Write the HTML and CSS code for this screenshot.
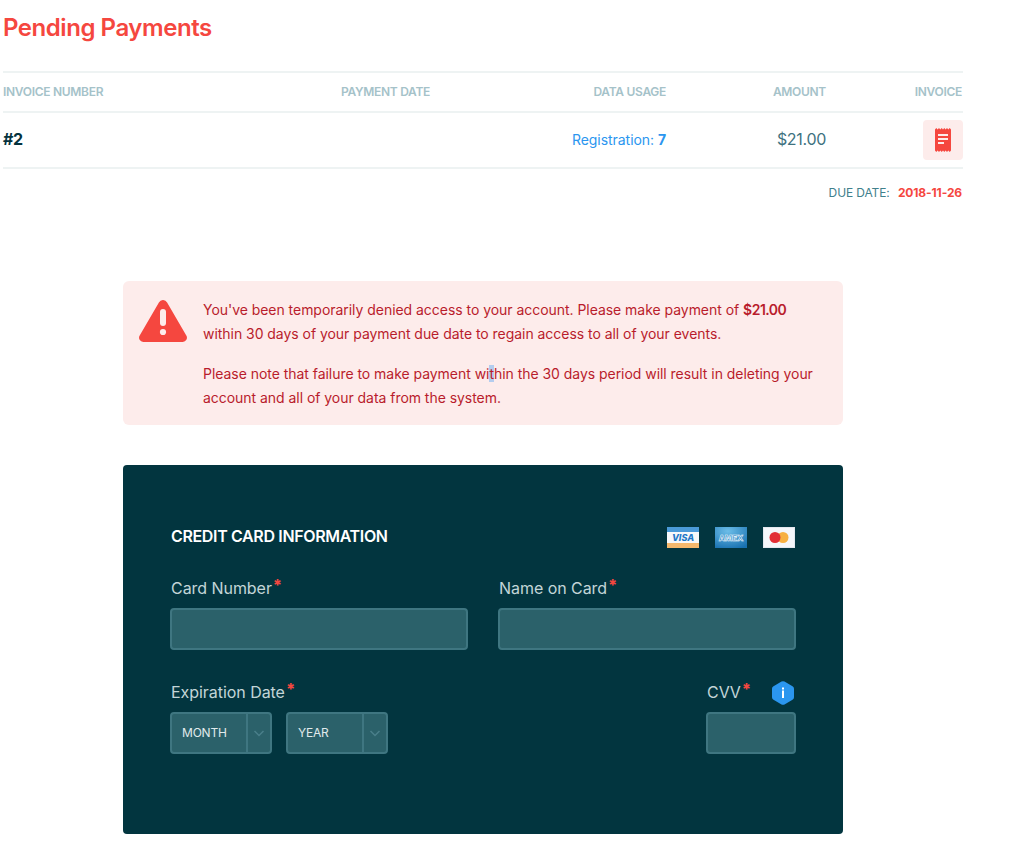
FILE: index.html
```html
<!DOCTYPE html>
<html lang="en">
<head>
<meta charset="utf-8">
<title>Pending Payments</title>
<link rel="stylesheet" href="styles.css">
</head>
<body>
<main class="page">
  <section class="pending">
    <h1 class="title">Pending Payments</h1>
    <div class="table">
      <div class="row head">
        <div>INVOICE NUMBER</div>
        <div>PAYMENT DATE</div>
        <div class="right">DATA USAGE</div>
        <div class="right">AMOUNT</div>
        <div class="right inset">INVOICE</div>
      </div>
      <div class="row body-row">
        <div class="num">#2</div>
        <div></div>
        <div class="right usage">Registration: <b>7</b></div>
        <div class="right amount">$21.00</div>
        <div class="right">
          <a class="receipt" aria-label="Invoice">
            <svg width="16" height="24" viewBox="0 0 16 24"><path fill="#f5473f" d="M0 1.5 1.3 0l1.3 1.5L4 0l1.3 1.5L6.7 0 8 1.500 9.300 0l1.300 1.500L12 0l1.300 1.500L14.700 0 16 1.500V22.500L14.700 24l-1.400-1.500L12 24l-1.400-1.500L9.300 24 8 22.500 6.700 24l-1.400-1.500L4 24l-1.400-1.500L1.300 24 0 22.500Z"/><path fill="#fdeceb" d="M3 6h10v2H3zM3 10h10v2H3zM3 14h6v2H3z"/></svg>
          </a>
        </div>
      </div>
    </div>
    <p class="due">DUE DATE: <b>2018-11-26</b></p>
  </section>

  <section class="alert">
    <svg class="alert-icon" width="48" height="42" viewBox="0 0 48 42"><path fill="#f5473f" d="M19.900 2.400a4.700 4.700 0 0 1 8.200 0l19.200 33.200A4.200 4.200 0 0 1 43.700 42H4.300a4.200 4.200 0 0 1-3.600-6.400Z"/><rect x="21" y="9" width="6" height="17" rx="3" fill="#fdeceb"/><circle cx="24" cy="32" r="3.100" fill="#fdeceb"/></svg>
    <div class="alert-text">
      <p>You've been temporarily denied access to your account. Please make payment of <b>$21.00</b><br>within 30 days of your payment due date to regain access to all of your events.</p>
      <p>Please note that failure to make payment wi<span class="sel">t</span>hin the 30 days period will result in deleting your<br>account and all of your data from the system.</p>
    </div>
  </section>

  <section class="card">
    <div class="card-head">
      <h2>CREDIT CARD INFORMATION</h2>
      <div class="brands">
        <svg width="32" height="21" viewBox="0 0 32 21"><rect width="32" height="21" fill="#f6f8fa"/><rect width="32" height="5" fill="#4a9ad8"/><rect y="16" width="32" height="5" fill="#f4b86d"/><text x="16" y="13.500" text-anchor="middle" class="visa">VISA</text></svg>
        <svg width="32" height="21" viewBox="0 0 32 21"><defs><radialGradient id="amex" cx=".4" cy=".2" r=".9"><stop offset="0" stop-color="#6cbde8"/><stop offset="1" stop-color="#1770b0"/></radialGradient></defs><rect width="32" height="21" fill="url(#amex)"/><text x="16" y="13.500" text-anchor="middle" class="amex">AMEX</text></svg>
        <svg width="32" height="21" viewBox="0 0 32 21"><rect x=".5" y=".5" width="31" height="20" fill="#f4f6fa" stroke="#e3e7ee"/><circle cx="20" cy="10.500" r="5.500" fill="#f7b041"/><circle cx="12" cy="10.500" r="5.500" fill="#e22e36"/></svg>
      </div>
    </div>
    <div class="form-row two">
      <div class="field">
        <label>Card Number<sup>*</sup></label>
        <div class="input"></div>
      </div>
      <div class="field">
        <label>Name on Card<sup>*</sup></label>
        <div class="input"></div>
      </div>
    </div>
    <div class="form-row split">
      <div class="field">
        <label>Expiration Date<sup>*</sup></label>
        <div class="selects">
          <div class="select month"><span>MONTH</span><i><svg width="12" height="7" viewBox="0 0 12 7"><path d="M1.500 1 6 5.500 10.500 1" fill="none" stroke="#4a7f8a" stroke-width="1.500"/></svg></i></div>
          <div class="select year"><span>YEAR</span><i><svg width="12" height="7" viewBox="0 0 12 7"><path d="M1.500 1 6 5.500 10.500 1" fill="none" stroke="#4a7f8a" stroke-width="1.500"/></svg></i></div>
        </div>
      </div>
      <div class="field cvv">
        <div class="cvv-label">
          <label>CVV<sup>*</sup></label>
          <span class="hex"><svg width="24" height="24" viewBox="0 0 24 24"><path fill="#2b96ef" d="M10.500.6a3 3 0 0 1 3 0l8 4.600a3 3 0 0 1 1.500 2.600v8.400a3 3 0 0 1-1.500 2.600l-8 4.600a3 3 0 0 1-3 0l-8-4.600A3 3 0 0 1 1 16.200V7.800a3 3 0 0 1 1.500-2.600Z"/><rect x="11" y="9.500" width="2" height="7.500" fill="#fff"/><rect x="11" y="6.500" width="2" height="2" fill="#fff"/></svg></span>
        </div>
        <div class="input"></div>
      </div>
    </div>
  </section>
</main>
</body>
</html>
```

FILE: styles.css
```css
* { box-sizing: border-box; }
html, body { margin: 0; padding: 0; background: #fff; }
body { font-family: Inter, "Liberation Sans", sans-serif; color: #04333e; height: 845px; overflow: hidden; }
.page { padding: 0 0 0 3px; width: 1033px; }
.pending { width: 960px; }
.title { margin: 0; padding-top: 13px; height: 71px; font-size: 24px; line-height: 29px; font-weight: 600; color: #f5473f; letter-spacing: -.45px; }
.row { display: grid; grid-template-columns: 338px 160px 165px 160px 137px; align-items: center; border-bottom: 2px solid #eef3f3; }
.head { border-top: 2px solid #eef3f3; height: 42px; font-size: 12px; font-weight: 600; color: #a5c2c9; letter-spacing: -.3px; padding-bottom: 1px; }
.body-row { height: 56px; font-size: 16px; }
.right { text-align: right; }
.inset { padding-right: 1px; }
.num { font-weight: 700; color: #04333e; font-size: 16px; padding-bottom: 2px; letter-spacing: -.3px; }
.usage { font-size: 14px; color: #2b96ef; letter-spacing: -.05px; padding-bottom: 2px; }
.usage b { font-weight: 700; }
.amount { font-size: 16px; color: #40727f; letter-spacing: -.3px; padding-bottom: 2px; }
.receipt { display: inline-flex; width: 40px; height: 40px; align-items: center; justify-content: center; background: #fdeceb; border-radius: 4px; vertical-align: middle; }
.due { margin: 16px 0 0; padding-right: 1px; text-align: right; font-size: 12px; line-height: 16px; color: #40808c; letter-spacing: -.12px; }
.due b { margin-left: 5px; font-weight: 700; color: #f5473f; }
.alert { display: flex; margin: 80px 0 0 120px; width: 720px; height: 144px; padding: 17px 24px 0 16px; gap: 16px; background: #fdeceb; border-radius: 6px; }
.alert-icon { flex: none; margin-top: 2px; }
.alert-text { font-size: 14px; line-height: 24px; color: #b91c2c; letter-spacing: -.04px; white-space: nowrap; }
.alert-text p { margin: 0 0 16px; }
.alert-text b { font-weight: 600; letter-spacing: -.5px; }
.sel { background: #b4cdef; }
.card { margin: 40px 0 0 120px; width: 720px; height: 369px; padding: 59px 47px 0; background: #02353f; border-radius: 4px; }
.card-head { display: flex; justify-content: space-between; align-items: center; height: 24px; padding: 0 1px; }
.card-head h2 { margin: 0; font-size: 16px; line-height: 24px; font-weight: 600; color: #fff; letter-spacing: -.35px; }
.brands { display: flex; gap: 16px; margin-top: 2px; }
.visa { font: italic 800 9px Inter, sans-serif; fill: #1f78c8; }
.amex { font: 800 8px Inter, sans-serif; fill: #2a86c8; stroke: #fff; stroke-width: .5px; }
.form-row { display: flex; justify-content: space-between; }
.two { margin-top: 28px; }
.two .field { width: 298px; }
.split { margin-top: 30px; }
.field label { display: block; padding-left: 1px; font-size: 16px; line-height: 24px; color: #c3d5d8; letter-spacing: -.05px; }
.field sup { font-size: 16px; line-height: 0; color: #f5473f; vertical-align: 3px; margin-left: 1px; font-weight: 800; }
.input { margin-top: 8px; height: 42px; background: #2b616a; border: 2px solid #3f7681; border-radius: 4px; }
.selects { display: flex; gap: 14px; margin-top: 8px; }
.select { display: flex; height: 42px; background: #2b616a; border: 2px solid #3f7681; border-radius: 4px; font-size: 12px; color: #e1eaec; }
.select span { flex: 1; padding-left: 10px; line-height: 38px; letter-spacing: -.2px; }
.select i { display: flex; width: 24px; align-items: center; justify-content: center; border-left: 2px solid #3f7681; }
.month { width: 102px; }
.year { width: 102px; }
.cvv { width: 90px; }
.cvv-label { display: flex; justify-content: space-between; align-items: center; height: 24px; padding-right: 1px; }
.hex { display: flex; margin-top: 2px; }
```
